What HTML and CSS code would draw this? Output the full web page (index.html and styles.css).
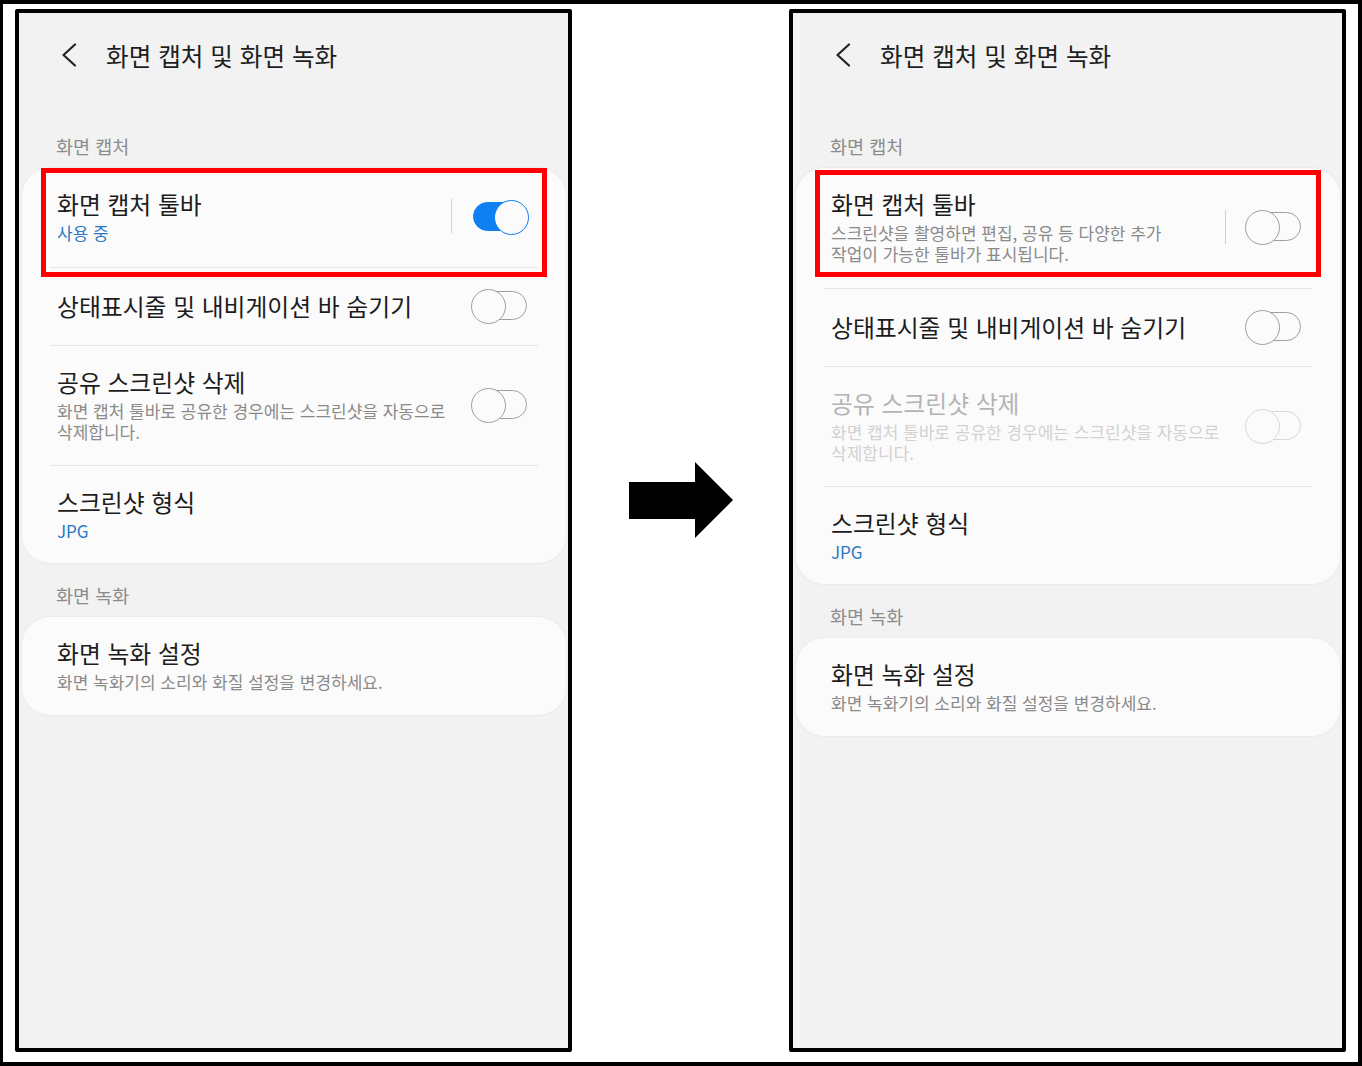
FILE: index.html
```html
<!DOCTYPE html>
<html lang="ko">
<head>
    <meta charset="UTF-8">
    <meta name="viewport" content="width=device-width, initial-scale=1.0">
    <title>화면 캡처 및 화면 녹화</title>
    <link rel="stylesheet" href="styles.css">
</head>
<body>
    <div class="frame">
        <!-- 변경 전 -->
        <div class="phone">
            <div class="appbar">
                <svg class="back" width="16" height="24" viewBox="0 0 16 24">
                    <polyline points="14,1.5 2.5,12 14,22.5" fill="none" stroke="#222" stroke-width="2.2" stroke-linecap="round" stroke-linejoin="round"/>
                </svg>
                <span class="appbar-title">화면 캡처 및 화면 녹화</span>
            </div>

            <div class="section-label first">화면 캡처</div>
            <div class="card">
                <div class="item">
                    <div class="item-text">
                        <div class="item-title">화면 캡처 툴바</div>
                        <div class="item-sub blue">사용 중</div>
                    </div>
                    <span class="sep"></span>
                    <span class="switch on"></span>
                </div>
                <div class="item">
                    <div class="item-text">
                        <div class="item-title">상태표시줄 및 내비게이션 바 숨기기</div>
                    </div>
                    <span class="switch"></span>
                </div>
                <div class="item">
                    <div class="item-text">
                        <div class="item-title">공유 스크린샷 삭제</div>
                        <div class="item-sub">화면 캡처 툴바로 공유한 경우에는 스크린샷을 자동으로<br>삭제합니다.</div>
                    </div>
                    <span class="switch"></span>
                </div>
                <div class="item last">
                    <div class="item-text">
                        <div class="item-title">스크린샷 형식</div>
                        <div class="item-sub blue">JPG</div>
                    </div>
                </div>
            </div>

            <div class="section-label">화면 녹화</div>
            <div class="card">
                <div class="item single">
                    <div class="item-text">
                        <div class="item-title">화면 녹화 설정</div>
                        <div class="item-sub">화면 녹화기의 소리와 화질 설정을 변경하세요.</div>
                    </div>
                </div>
            </div>

            <div class="highlight"></div>
        </div>

        <div class="arrow-area">
            <svg width="104" height="76" viewBox="0 0 104 76">
                <polygon points="0,20 66,20 66,0 104,38 66,76 66,57 0,57" fill="#000"/>
            </svg>
        </div>

        <!-- 변경 후 -->
        <div class="phone">
            <div class="appbar">
                <svg class="back" width="16" height="24" viewBox="0 0 16 24">
                    <polyline points="14,1.5 2.5,12 14,22.5" fill="none" stroke="#222" stroke-width="2.2" stroke-linecap="round" stroke-linejoin="round"/>
                </svg>
                <span class="appbar-title">화면 캡처 및 화면 녹화</span>
            </div>

            <div class="section-label first">화면 캡처</div>
            <div class="card">
                <div class="item">
                    <div class="item-text">
                        <div class="item-title">화면 캡처 툴바</div>
                        <div class="item-sub">스크린샷을 촬영하면 편집, 공유 등 다양한 추가<br>작업이 가능한 툴바가 표시됩니다.</div>
                    </div>
                    <span class="sep"></span>
                    <span class="switch"></span>
                </div>
                <div class="item">
                    <div class="item-text">
                        <div class="item-title">상태표시줄 및 내비게이션 바 숨기기</div>
                    </div>
                    <span class="switch"></span>
                </div>
                <div class="item disabled">
                    <div class="item-text">
                        <div class="item-title">공유 스크린샷 삭제</div>
                        <div class="item-sub">화면 캡처 툴바로 공유한 경우에는 스크린샷을 자동으로<br>삭제합니다.</div>
                    </div>
                    <span class="switch"></span>
                </div>
                <div class="item last">
                    <div class="item-text">
                        <div class="item-title">스크린샷 형식</div>
                        <div class="item-sub blue">JPG</div>
                    </div>
                </div>
            </div>

            <div class="section-label">화면 녹화</div>
            <div class="card">
                <div class="item single">
                    <div class="item-text">
                        <div class="item-title">화면 녹화 설정</div>
                        <div class="item-sub">화면 녹화기의 소리와 화질 설정을 변경하세요.</div>
                    </div>
                </div>
            </div>

            <div class="highlight right"></div>
        </div>
    </div>
</body>
</html>
```

FILE: styles.css
```css
* {
    box-sizing: border-box;
}

body {
    margin: 0;
    background-color: #fff;
    font-family: 'Noto Sans CJK KR', 'Noto Sans', sans-serif;
    color: #1c1c1c;
}

.frame {
    width: 1362px;
    height: 1066px;
    border: solid #000;
    border-width: 4px 4px 4px 3px;
    padding: 5px 12px 10px 12px;
    display: flex;
}

.phone {
    position: relative;
    width: 557px;
    height: 1043px;
    border: 4px solid #000;
    border-radius: 2px;
    background-color: #f2f2f2;
    overflow: hidden;
}

.arrow-area {
    flex: 1;
    display: flex;
    justify-content: center;
    align-items: flex-start;
    padding-top: 453px;
}

/* 상단 바 */
.appbar {
    height: 84px;
    display: flex;
    align-items: center;
    padding-left: 42px;
}

.back {
    display: block;
}

.appbar-title {
    margin-left: 29px;
    font-size: 24.6px;
    line-height: 30px;
    color: #1e1e1e;
}

.section-label {
    margin: 20px 0 10px;
    padding-left: 37px;
    font-size: 18.5px;
    line-height: 24px;
    color: #8c8c8c;
}

.section-label.first {
    margin-top: 37px;
    margin-bottom: 10px;
}

/* 카드 */
.card {
    margin: 0 2px 0 3px;
    padding: 0 28px;
    background-color: #fbfbfb;
    border-radius: 28px;
    box-shadow: 0 0 0 1px #ebebeb;
}

.item {
    display: flex;
    align-items: center;
    padding: 21px 11px 23px 7px;
    border-top: 1px solid #e7e7e7;
}

.item:first-child {
    border-top: none;
    padding-bottom: 24px;
}

.item.last {
    padding-bottom: 22px;
}

.item.single {
    padding-bottom: 23px;
}

.item-text {
    flex: 1;
}

.item-title {
    font-size: 23.8px;
    line-height: 30px;
    color: #1c1c1c;
}

.item-sub {
    margin-top: 3px;
    font-size: 17px;
    line-height: 21px;
    color: #8a8a8a;
}

.item-sub.blue {
    color: #2a78c3;
}

.disabled .item-title {
    color: #b4b4b4;
}

.disabled .item-sub {
    color: #d2d2d2;
}

.sep {
    width: 1px;
    height: 34px;
    margin-right: 19px;
    background-color: #d0d0d0;
}

/* 스위치 */
.switch {
    position: relative;
    width: 56px;
    height: 33px;
    flex-shrink: 0;
}

.switch::before {
    content: "";
    position: absolute;
    left: 2px;
    right: 0;
    top: 2px;
    bottom: 2px;
    border: 1.6px solid #9f9f9f;
    border-radius: 15px;
}

.switch::after {
    content: "";
    position: absolute;
    left: 0;
    top: 0;
    width: 33px;
    height: 33px;
    border: 1.6px solid #9f9f9f;
    border-radius: 50%;
    background-color: #fbfbfb;
}

.disabled .switch::before,
.disabled .switch::after {
    border-color: #d8d8d8;
}

.switch.on::before {
    background-color: #0f80f2;
    border-color: #0f80f2;
}

.switch.on::after {
    left: 23px;
    border-color: #0f80f2;
    background-color: #fbfbfb;
}

/* 빨간 강조 박스 */
.highlight {
    position: absolute;
    left: 22px;
    top: 155px;
    width: 506px;
    height: 109px;
    border: 5px solid #ff0000;
}

.highlight.right {
    left: 22px;
    top: 157px;
    height: 107px;
}
```
